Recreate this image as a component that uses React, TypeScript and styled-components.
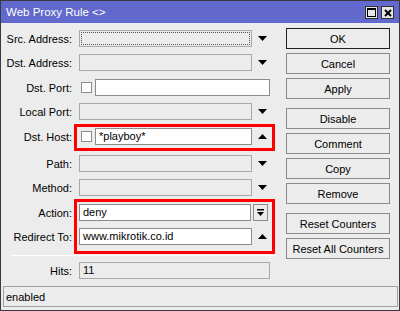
import * as React from 'react';
import styled, { createGlobalStyle } from 'styled-components';

const GlobalStyle = createGlobalStyle`
    html, body {
        margin: 0;
        padding: 0;
        background: #ececec;
    }
    * {
        box-sizing: border-box;
    }
`;

const Window = styled.div`
    width: 400px;
    height: 311px;
    display: flex;
    flex-direction: column;
    border: 1px solid #3a3a3a;
    background: #ececec;
    font-family: "Liberation Sans", Arial, sans-serif;
    font-size: 11px;
    color: #000;
`;

const TitleBar = styled.div`
    height: 22px;
    flex: none;
    display: flex;
    align-items: center;
    justify-content: space-between;
    padding: 0 5px 0 5px;
    background: #6169cc;
    color: #fff;
    font-size: 11.5px;
`;

const TitleButtons = styled.div`
    display: flex;
    gap: 3px;
    margin-top: 1px;
`;

const TitleButton = styled.div`
    width: 13px;
    height: 13px;
    border: 1px solid #303030;
    background: #e6e6e6;
    display: flex;
    align-items: center;
    justify-content: center;
`;

const Main = styled.div`
    flex: 1;
    display: flex;
    align-items: flex-start;
`;

const Form = styled.div`
    position: relative;
    width: 269px;
    padding-top: 7px;
    display: flex;
    flex-direction: column;
`;

const Row = styled.div<{ $space?: number }>`
    display: flex;
    align-items: center;
    height: 17px;
    margin-top: ${ (p) => p.$space ?? 0 }px;
`;

const Label = styled.div`
    width: 78px;
    padding-right: 7px;
    text-align: right;
    white-space: nowrap;
`;

const FieldArea = styled.div`
    width: 191px;
    height: 17px;
    display: flex;
    align-items: center;
`;

const Input = styled.div<{ $white?: boolean; $focus?: boolean }>`
    flex: 1;
    height: 17px;
    border: 1px solid ${ (p) => (p.$white ? '#8c8c8c' : '#a8a8a8') };
    background: ${ (p) => (p.$white ? '#fff' : '#ececec') };
    padding: 0 3px;
    line-height: 15px;
    white-space: nowrap;
    overflow: hidden;
    position: relative;
    ${ (p) => p.$focus && `
        &::after {
            content: '';
            position: absolute;
            inset: 1px;
            border: 1px dotted #555;
        }
    ` }
`;

const Check = styled.div`
    width: 11px;
    height: 11px;
    flex: none;
    border: 1px solid #8c8c8c;
    background: #fff;
    margin: 0 3px 0 2px;
`;

const Arrow = styled.div`
    width: 18px;
    flex: none;
    display: flex;
    align-items: center;
    justify-content: center;
    padding-left: 2px;
`;

const SmallButton = styled.div`
    width: 15px;
    height: 17px;
    flex: none;
    margin: 0 2px 0 2px;
    border: 1px solid #8c8c8c;
    background: #ececec;
    display: flex;
    align-items: center;
    justify-content: center;
`;

const Separator = styled.div`
    height: 1px;
    margin: 10px 0 0 10px;
    width: 265px;
    background: #c4c4c4;
    border-bottom: 1px solid #fff;
`;

const Highlight = styled.div<{ $top: number; $height: number }>`
    position: absolute;
    left: 73px;
    top: ${ (p) => p.$top }px;
    width: 201px;
    height: ${ (p) => p.$height }px;
    border: 3px solid #ff0000;
    pointer-events: none;
`;

const ButtonColumn = styled.div`
    width: 104px;
    margin-left: 16px;
    padding-top: 5px;
    display: flex;
    flex-direction: column;
`;

const ButtonGroup = styled.div<{ $space?: number }>`
    display: flex;
    flex-direction: column;
    gap: 4px;
    margin-top: ${ (p) => p.$space ?? 0 }px;
`;

const Button = styled.div<{ $default?: boolean }>`
    height: 21px;
    border: 1px solid ${ (p) => (p.$default ? '#202020' : '#8a8a8a') };
    background: #ececec;
    display: flex;
    align-items: center;
    justify-content: center;
    white-space: nowrap;
`;

const StatusBar = styled.div`
    height: 21px;
    flex: none;
    margin: 0 1px 3px 2px;
    border: 1px solid #a0a0a0;
    padding: 0 2px;
    display: flex;
    align-items: center;
`;

const Down = () => (
    <svg width="9" height="5" viewBox="0 0 9 5">
        <path d="M0 0H9L4.5 5Z" fill="#000" />
    </svg>
);

const Up = () => (
    <svg width="9" height="5" viewBox="0 0 9 5">
        <path d="M0 5H9L4.5 0Z" fill="#000" />
    </svg>
);

const DownBar = () => (
    <svg width="7" height="7" viewBox="0 0 7 7">
        <rect x="0" y="0" width="7" height="1.5" fill="#000" />
        <path d="M0 3H7L3.5 7Z" fill="#000" />
    </svg>
);

const buttonGroups = [
    ['OK', 'Cancel', 'Apply'],
    ['Disable', 'Comment', 'Copy', 'Remove'],
    ['Reset Counters', 'Reset All Counters'],
];

const App: React.FC = () => {
    return (
        <>
            <GlobalStyle />
            <Window>
                <TitleBar>
                    <span>Web Proxy Rule &lt;&gt;</span>
                    <TitleButtons>
                        <TitleButton>
                            <svg width="9" height="9" viewBox="0 0 9 9">
                                <rect x="0.5" y="0.5" width="8" height="8" fill="none" stroke="#000" />
                                <rect x="0" y="0" width="9" height="2" fill="#000" />
                            </svg>
                        </TitleButton>
                        <TitleButton>
                            <svg width="8" height="8" viewBox="0 0 8 8">
                                <path d="M1 1L7 7M7 1L1 7" stroke="#000" strokeWidth="2" />
                            </svg>
                        </TitleButton>
                    </TitleButtons>
                </TitleBar>
                <Main>
                    <Form>
                        <Row>
                            <Label>Src. Address:</Label>
                            <FieldArea>
                                <Input $focus />
                                <Arrow><Down /></Arrow>
                            </FieldArea>
                        </Row>
                        <Row $space={7}>
                            <Label>Dst. Address:</Label>
                            <FieldArea>
                                <Input />
                                <Arrow><Down /></Arrow>
                            </FieldArea>
                        </Row>
                        <Row $space={8}>
                            <Label>Dst. Port:</Label>
                            <FieldArea>
                                <Check />
                                <Input $white />
                            </FieldArea>
                        </Row>
                        <Row $space={7}>
                            <Label>Local Port:</Label>
                            <FieldArea>
                                <Input />
                                <Arrow><Down /></Arrow>
                            </FieldArea>
                        </Row>
                        <Row $space={8}>
                            <Label>Dst. Host:</Label>
                            <FieldArea>
                                <Check />
                                <Input $white>*playboy*</Input>
                                <Arrow><Up /></Arrow>
                            </FieldArea>
                        </Row>
                        <Row $space={10}>
                            <Label>Path:</Label>
                            <FieldArea>
                                <Input />
                                <Arrow><Down /></Arrow>
                            </FieldArea>
                        </Row>
                        <Row $space={7}>
                            <Label>Method:</Label>
                            <FieldArea>
                                <Input />
                                <Arrow><Down /></Arrow>
                            </FieldArea>
                        </Row>
                        <Row $space={8}>
                            <Label>Action:</Label>
                            <FieldArea>
                                <Input $white>deny</Input>
                                <SmallButton><DownBar /></SmallButton>
                            </FieldArea>
                        </Row>
                        <Row $space={7}>
                            <Label>Redirect To:</Label>
                            <FieldArea>
                                <Input $white>www.mikrotik.co.id</Input>
                                <Arrow><Up /></Arrow>
                            </FieldArea>
                        </Row>
                        <Separator />
                        <Row $space={6}>
                            <Label>Hits:</Label>
                            <FieldArea>
                                <Input>11</Input>
                            </FieldArea>
                        </Row>
                        <Highlight $top={101} $height={27} />
                        <Highlight $top={176} $height={55} />
                    </Form>
                    <ButtonColumn>
                        { buttonGroups.map((group, i) => (
                            <ButtonGroup key={ i } $space={ i === 0 ? 0 : 9 }>
                                { group.map((name) => (
                                    <Button key={ name } $default={ name === 'OK' }>{ name }</Button>
                                )) }
                            </ButtonGroup>
                        )) }
                    </ButtonColumn>
                </Main>
                <StatusBar>enabled</StatusBar>
            </Window>
        </>
    );
};

export default App;
